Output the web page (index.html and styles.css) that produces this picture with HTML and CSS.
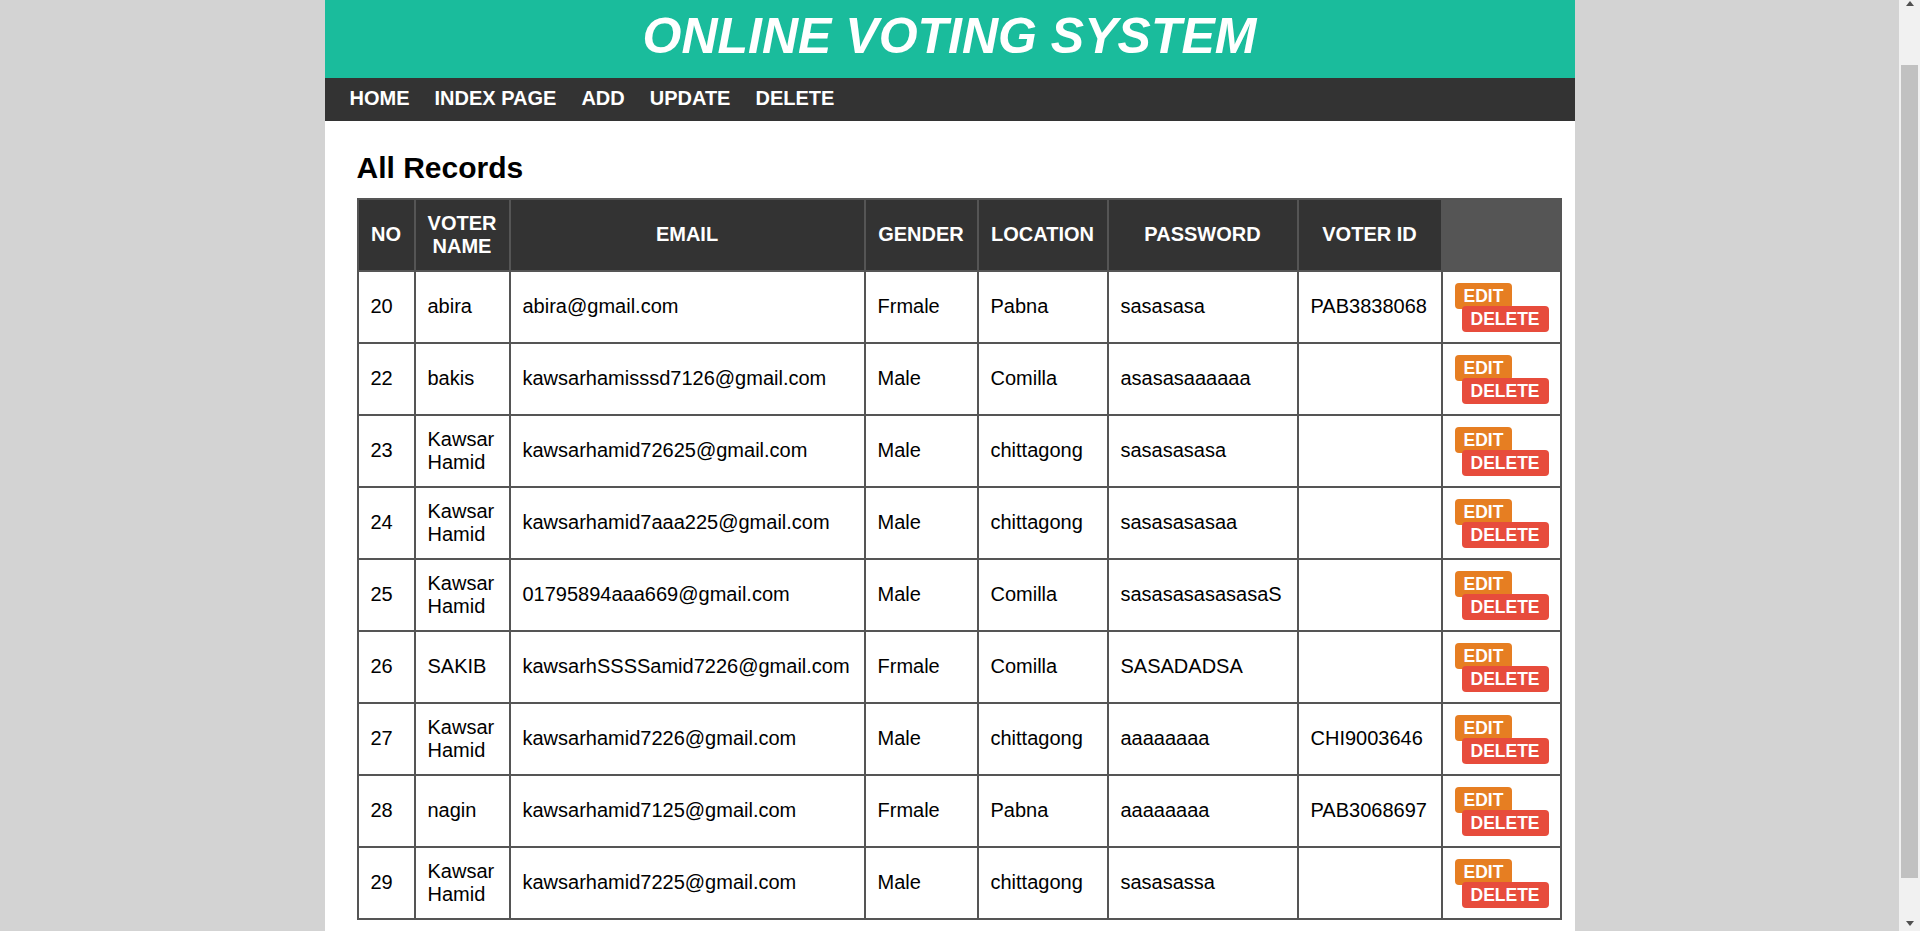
FILE: index.html
```html
<!DOCTYPE html>
<html lang="en">
<head>
<meta charset="utf-8">
<title>Online Voting System</title>
<link rel="stylesheet" href="styles.css">
</head>
<body>
<div class="viewport">
  <div class="page">
    <header class="banner">
      <h1 class="title">ONLINE VOTING SYSTEM</h1>
    </header>
    <nav class="menu">
      <a class="menu-link" href="#">HOME</a>
      <a class="menu-link" href="#">INDEX PAGE</a>
      <a class="menu-link" href="#">ADD</a>
      <a class="menu-link" href="#">UPDATE</a>
      <a class="menu-link" href="#">DELETE</a>
    </nav>
    <section class="content">
      <h2 class="heading">All Records</h2>
      <table class="records">
        <thead>
          <tr>
            <th class="c-no">NO</th>
            <th class="c-name">VOTER NAME</th>
            <th class="c-email">EMAIL</th>
            <th class="c-gender">GENDER</th>
            <th class="c-loc">LOCATION</th>
            <th class="c-pass">PASSWORD</th>
            <th class="c-vid">VOTER ID</th>
            <th class="c-act empty"></th>
          </tr>
        </thead>
        <tbody>
          <tr>
            <td>20</td><td>abira</td><td class="email">abira@gmail.com</td><td>Frmale</td><td>Pabna</td><td>sasasasa</td><td>PAB3838068</td>
            <td><a class="btn edit" href="#">EDIT</a> <a class="btn delete" href="#">DELETE</a></td>
          </tr>
          <tr>
            <td>22</td><td>bakis</td><td class="email">kawsarhamisssd7126@gmail.com</td><td>Male</td><td>Comilla</td><td>asasasaaaaaa</td><td></td>
            <td><a class="btn edit" href="#">EDIT</a> <a class="btn delete" href="#">DELETE</a></td>
          </tr>
          <tr>
            <td>23</td><td>Kawsar Hamid</td><td class="email">kawsarhamid72625@gmail.com</td><td>Male</td><td>chittagong</td><td>sasasasasa</td><td></td>
            <td><a class="btn edit" href="#">EDIT</a> <a class="btn delete" href="#">DELETE</a></td>
          </tr>
          <tr>
            <td>24</td><td>Kawsar Hamid</td><td class="email">kawsarhamid7aaa225@gmail.com</td><td>Male</td><td>chittagong</td><td>sasasasasaa</td><td></td>
            <td><a class="btn edit" href="#">EDIT</a> <a class="btn delete" href="#">DELETE</a></td>
          </tr>
          <tr>
            <td>25</td><td>Kawsar Hamid</td><td class="email">01795894aaa669@gmail.com</td><td>Male</td><td>Comilla</td><td>sasasasasasasaS</td><td></td>
            <td><a class="btn edit" href="#">EDIT</a> <a class="btn delete" href="#">DELETE</a></td>
          </tr>
          <tr>
            <td>26</td><td>SAKIB</td><td class="email">kawsarhSSSSamid7226@gmail.com</td><td>Frmale</td><td>Comilla</td><td>SASADADSA</td><td></td>
            <td><a class="btn edit" href="#">EDIT</a> <a class="btn delete" href="#">DELETE</a></td>
          </tr>
          <tr>
            <td>27</td><td>Kawsar Hamid</td><td class="email">kawsarhamid7226@gmail.com</td><td>Male</td><td>chittagong</td><td>aaaaaaaa</td><td>CHI9003646</td>
            <td><a class="btn edit" href="#">EDIT</a> <a class="btn delete" href="#">DELETE</a></td>
          </tr>
          <tr>
            <td>28</td><td>nagin</td><td class="email">kawsarhamid7125@gmail.com</td><td>Frmale</td><td>Pabna</td><td>aaaaaaaa</td><td>PAB3068697</td>
            <td><a class="btn edit" href="#">EDIT</a> <a class="btn delete" href="#">DELETE</a></td>
          </tr>
          <tr>
            <td>29</td><td>Kawsar Hamid</td><td class="email">kawsarhamid7225@gmail.com</td><td>Male</td><td>chittagong</td><td>sasasassa</td><td></td>
            <td><a class="btn edit" href="#">EDIT</a> <a class="btn delete" href="#">DELETE</a></td>
          </tr>
        </tbody>
      </table>
    </section>
  </div>
</div>
<div class="scrollbar">
  <span class="arrow up"></span>
  <span class="thumb"></span>
  <span class="track-rest"></span>
  <span class="arrow down"></span>
</div>
</body>
</html>
```

FILE: styles.css
```css
html, body {
  margin: 0;
  padding: 0;
  height: 100%;
  overflow: hidden;
}

body {
  display: flex;
  font-family: "Liberation Sans", Arial, sans-serif;
  background: #d3d3d3;
}

.viewport {
  flex: 1;
  height: 100vh;
  overflow: hidden;
  background: #d3d3d3;
}

.page {
  width: 1250px;
  margin: 0 auto;
  min-height: 100%;
  background: #ffffff;
}

.banner {
  background: #1abc9c;
  height: 78px;
  box-sizing: border-box;
  padding: 7px 0 13px;
}

.title {
  margin: 0;
  text-align: center;
  color: #ffffff;
  font-size: 50px;
  font-weight: bold;
  font-style: italic;
  line-height: 58px;
}

.menu {
  display: flex;
  height: 43px;
  box-sizing: border-box;
  padding: 9px 12.5px 0;
  background: #333333;
}

.menu-link {
  padding: 0 12.5px;
  color: #ffffff;
  text-decoration: none;
  font-size: 20px;
  font-weight: bold;
  line-height: 23px;
}

.content {
  padding: 0 13px 0 32px;
}

.heading {
  margin: 30px 0 12px;
  font-size: 30px;
  font-weight: bold;
  line-height: 34.5px;
  color: #000000;
}

.records {
  width: 1205px;
  table-layout: fixed;
  border-collapse: separate;
  border-spacing: 2px;
  background: #555555;
  font-size: 20px;
  line-height: 23px;
}

.records th,
.records td {
  box-sizing: border-box;
  padding: 12px;
  vertical-align: middle;
}

.records th {
  background: #333333;
  color: #ffffff;
  font-weight: bold;
  text-align: center;
}

.records th.empty {
  background: transparent;
}

.records td {
  background: #ffffff;
  color: #000000;
  text-align: left;
}

.records td.email {
  white-space: nowrap;
}

.c-no { width: 55px; }
.c-name { width: 93px; }
.c-email { width: 353px; }
.c-gender { width: 111px; }
.c-loc { width: 128px; }
.c-pass { width: 188px; }
.c-vid { width: 142px; }

.btn {
  color: #ffffff;
  text-decoration: none;
  font-size: 17.5px;
  font-weight: bold;
  line-height: 1;
  padding: 3px 9px;
  border-radius: 4px;
}

.edit {
  background: #e67e22;
}

.delete {
  background: #e74c3c;
  margin-left: 7px;
}

.scrollbar {
  width: 21px;
  height: 100vh;
  background: #f1f1f1;
  display: flex;
  flex-direction: column;
  align-items: center;
}

.arrow {
  width: 0;
  height: 0;
  border-left: 4.5px solid transparent;
  border-right: 4.5px solid transparent;
}

.arrow.up {
  margin-top: 1px;
  border-bottom: 5px solid #505050;
}

.arrow.down {
  margin-bottom: 5px;
  border-top: 5px solid #505050;
}

.thumb {
  margin-top: 59px;
  width: 17px;
  height: 813px;
  background: #c1c1c1;
}

.track-rest {
  flex: 1;
}
```
